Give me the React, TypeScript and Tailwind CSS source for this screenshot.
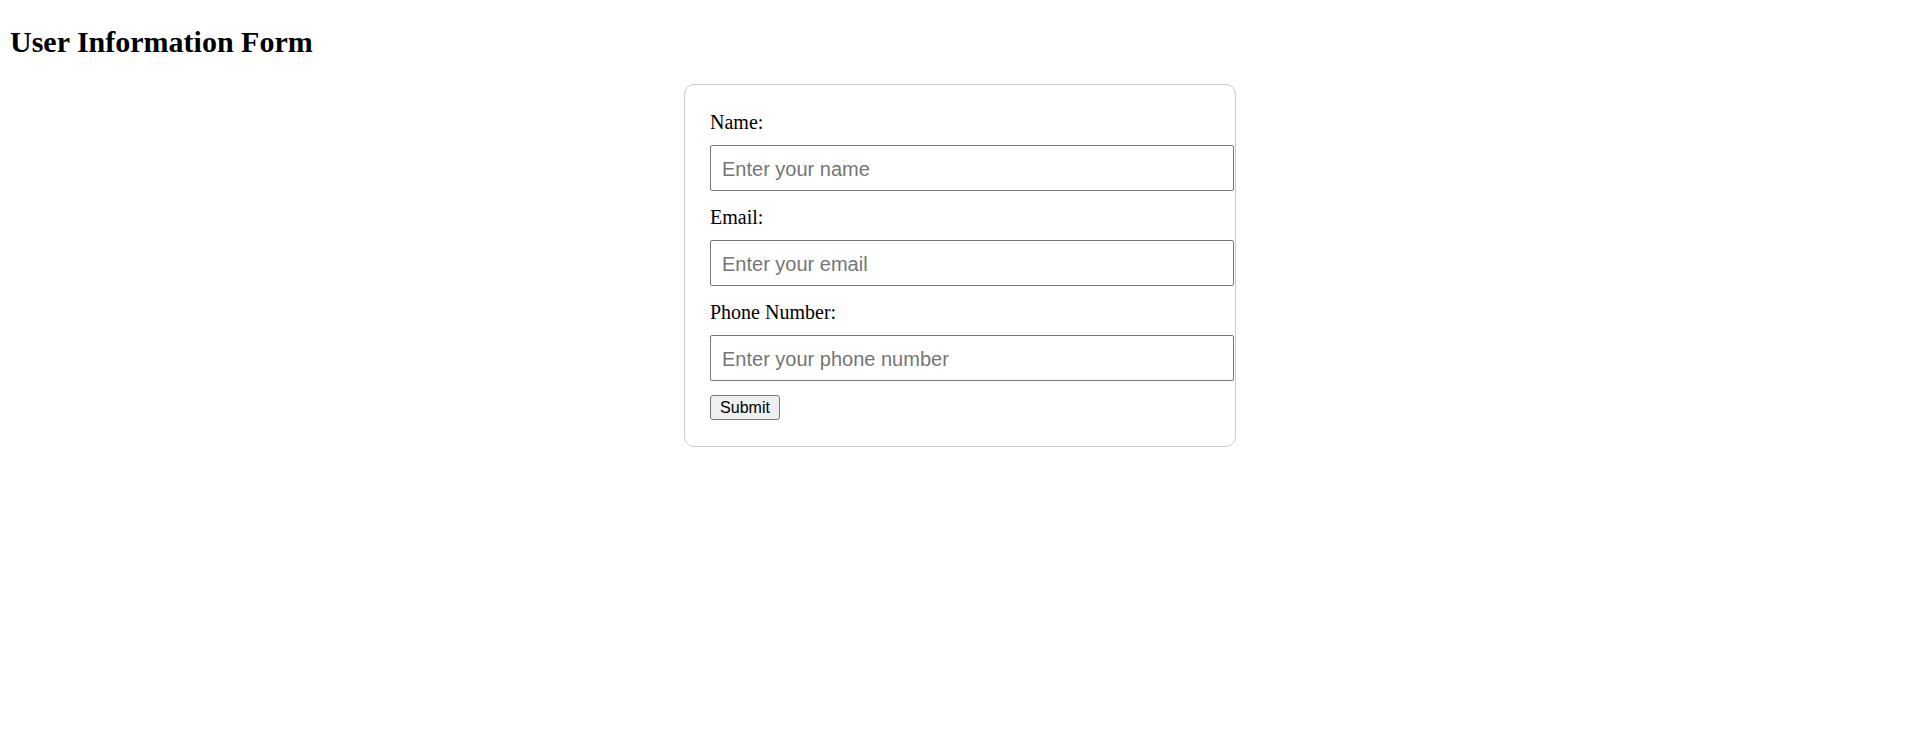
import { useState } from "react";

export default function App() {
  const [name, setName] = useState("");
  const [email, setEmail] = useState("");
  const [phone, setPhone] = useState("");

  const fields = [
    { label: "Name:", type: "text", placeholder: "Enter your name", value: name, set: setName },
    { label: "Email:", type: "email", placeholder: "Enter your email", value: email, set: setEmail },
    { label: "Phone Number:", type: "tel", placeholder: "Enter your phone number", value: phone, set: setPhone },
  ];

  return (
    <div className="min-h-screen bg-white pt-[25px] pl-[10px] pr-[8px] text-black font-['Liberation_Serif',serif]">
      <h2 className="m-0 mb-[25px] text-[30px] font-bold leading-[34px]">User Information Form</h2>

      <form
        className="mx-auto flex w-[552px] flex-col rounded-[10px] border border-[#cccccc] px-[25px] pt-[25px] pb-[26px]"
        onSubmit={(e) => e.preventDefault()}
      >
        {fields.map((f) => (
          <div key={f.label} className="mb-[14px] flex flex-col">
            <label className="block text-[20px] leading-[24px]">{f.label}</label>
            <input
              type={f.type}
              value={f.value}
              onChange={(e) => f.set(e.target.value)}
              placeholder={f.placeholder}
              className="mt-[11px] h-[46px] w-[524px] max-w-none shrink-0 rounded-[2px] border border-[#767676] bg-white px-[11px] pt-[3px] font-['Liberation_Sans',Arial,sans-serif] text-[20px] leading-normal text-black outline-none placeholder:text-[#757575]"
            />
          </div>
        ))}

        <button
          type="submit"
          className="flex h-[25px] w-[70px] items-center justify-center self-start rounded-[3px] border border-[#767676] bg-[#efefef] font-['Liberation_Sans',Arial,sans-serif] text-[16px] leading-normal text-black"
        >
          Submit
        </button>
      </form>
    </div>
  );
}
